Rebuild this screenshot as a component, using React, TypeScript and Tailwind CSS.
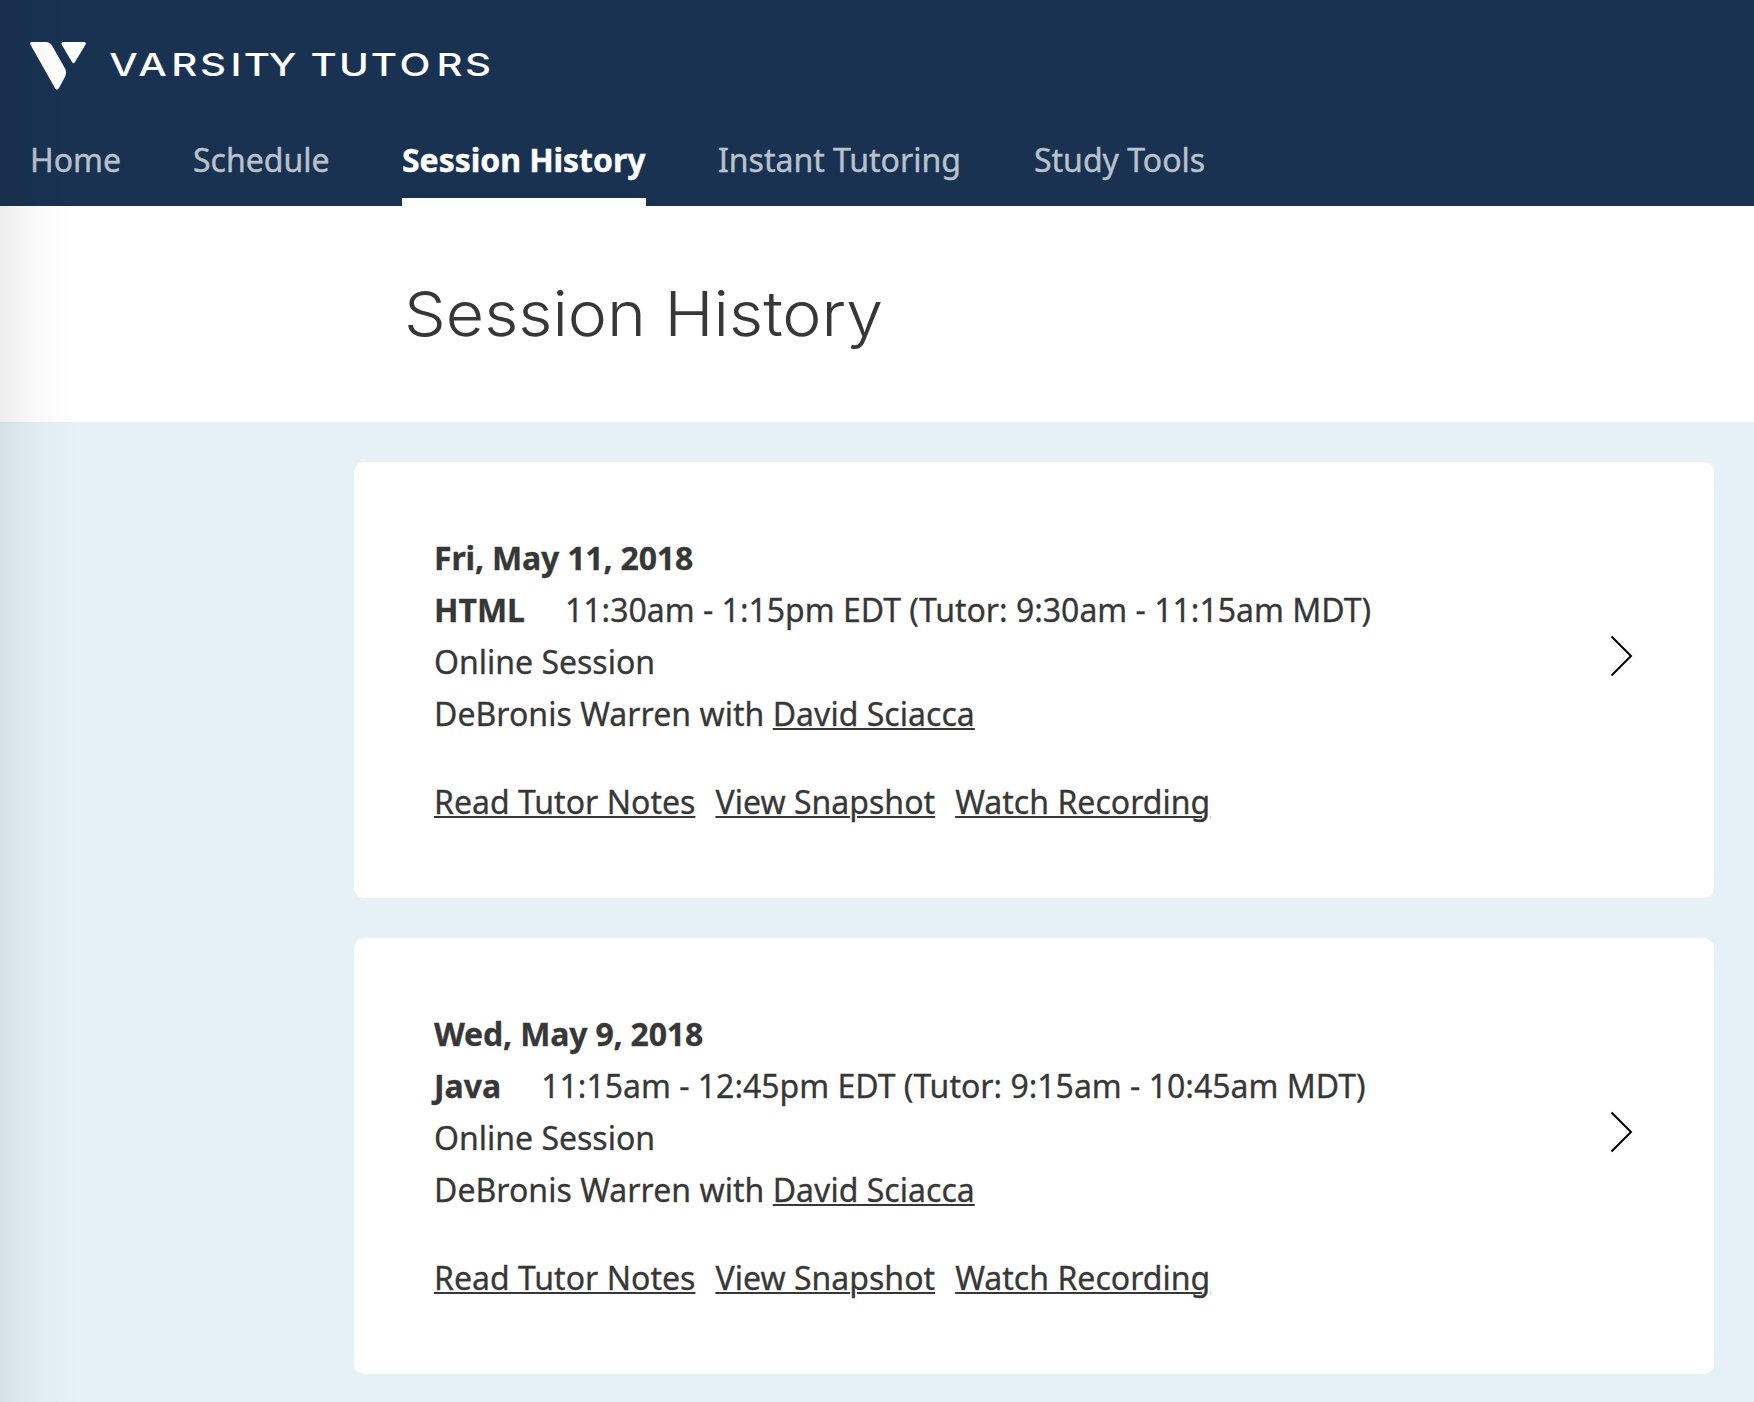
const NAV = [
  { label: "Home", width: "w-[91px]" },
  { label: "Schedule", width: "w-[137px]" },
  { label: "Session History", width: "w-[244px]", active: true },
  { label: "Instant Tutoring", width: "w-[244px]" },
  { label: "Study Tools", width: "w-[173px]" },
];

const SESSIONS = [
  {
    date: "Fri, May 11, 2018",
    subject: "HTML",
    time: "11:30am - 1:15pm EDT (Tutor: 9:30am - 11:15am MDT)",
  },
  {
    date: "Wed, May 9, 2018",
    subject: "Java",
    time: "11:15am - 12:45pm EDT (Tutor: 9:15am - 10:45am MDT)",
  },
];

const LINK = "underline decoration-2 underline-offset-2 tracking-[0.03px]";

function Logo() {
  return (
    <svg className="block h-[100px] w-[500px]" viewBox="0 0 500 100" fill="white">
      <path d="M32 42H46Q50 42 52 45.5L65 68.500Q67 72 65.200 76.500L59 88Q57 91.500 55 88L30.600 45Q29.200 42 32 42Z" />
      <path d="M63.500 42H83.700Q87 42 85.300 45L75 62Q73.500 64.500 72 62L61.900 45Q60.500 42 63.500 42Z" />
      <text
        transform="scale(1.3 1)"
        x="95 117.3 141.7 163.8 181.5 197.7 217.3 230 249 272.3 295.400 319.2 345.800 367.700"
        y="76"
        textAnchor="middle"
        className="font-['Inter',sans-serif] text-[31px] font-medium"
      >
        VARSITY TUTORS
      </text>
    </svg>
  );
}

function SessionCard({ date, subject, time }: (typeof SESSIONS)[number]) {
  return (
    <article className="flex h-[436px] items-center justify-between rounded-[10px] bg-white px-20">
      <div className="whitespace-nowrap [-webkit-text-stroke:0.3px]">
        <p className="font-bold tracking-[-0.18px]">{date}</p>
        <p className="flex gap-10">
          <strong>{subject}</strong>
          <span>{time}</span>
        </p>
        <p>Online Session</p>
        <p className="tracking-[0.04px]">
          DeBronis Warren with <a className={LINK}>David Sciacca</a>
        </p>
        <p className="mt-9 flex gap-5">
          <a className={LINK}>Read Tutor Notes</a>
          <a className={LINK}>View Snapshot</a>
          <a className={LINK}>Watch Recording</a>
        </p>
      </div>
      <svg className="mt-[-49px] h-[42px] w-6" viewBox="0 0 24 42" fill="none" stroke="black" strokeWidth="2">
        <path d="M1.500 1.500L21 21L1.500 40.500" />
      </svg>
    </article>
  );
}

export default function App() {
  return (
    <div className="relative flex h-[1402px] w-[1754px] flex-col overflow-hidden bg-white font-['Noto_Sans',sans-serif] text-[32px] leading-[52px] text-[#373737]">
      <header className="flex h-[206px] flex-col bg-[#193252]">
        <Logo />
        <nav className="flex flex-1 gap-[72px] pl-[30px] [-webkit-text-stroke:0.4px]">
          {NAV.map((n) => (
            <a
              key={n.label}
              className={`${n.width} whitespace-nowrap pt-[34px] ${
                n.active
                  ? "border-b-8 border-white font-bold tracking-[-0.05px] text-white"
                  : "text-[#b9c2cc]"
              }`}
            >
              {n.label}
            </a>
          ))}
        </nav>
      </header>
      <section className="flex h-[216px] items-center pl-[404px]">
        <h1 className="origin-left scale-x-[1.067] font-['Inter',sans-serif] text-[62px] font-light leading-[80px]">
          Session History
        </h1>
      </section>
      <main className="flex flex-1 flex-col gap-10 bg-[#e6f1f7] pt-10 pr-10 pl-[354px]">
        {SESSIONS.map((s) => (
          <SessionCard key={s.date} {...s} />
        ))}
      </main>
      <div className="pointer-events-none absolute inset-y-0 left-0 w-20 bg-linear-to-r from-black/7 via-black/2 to-transparent" />
    </div>
  );
}
